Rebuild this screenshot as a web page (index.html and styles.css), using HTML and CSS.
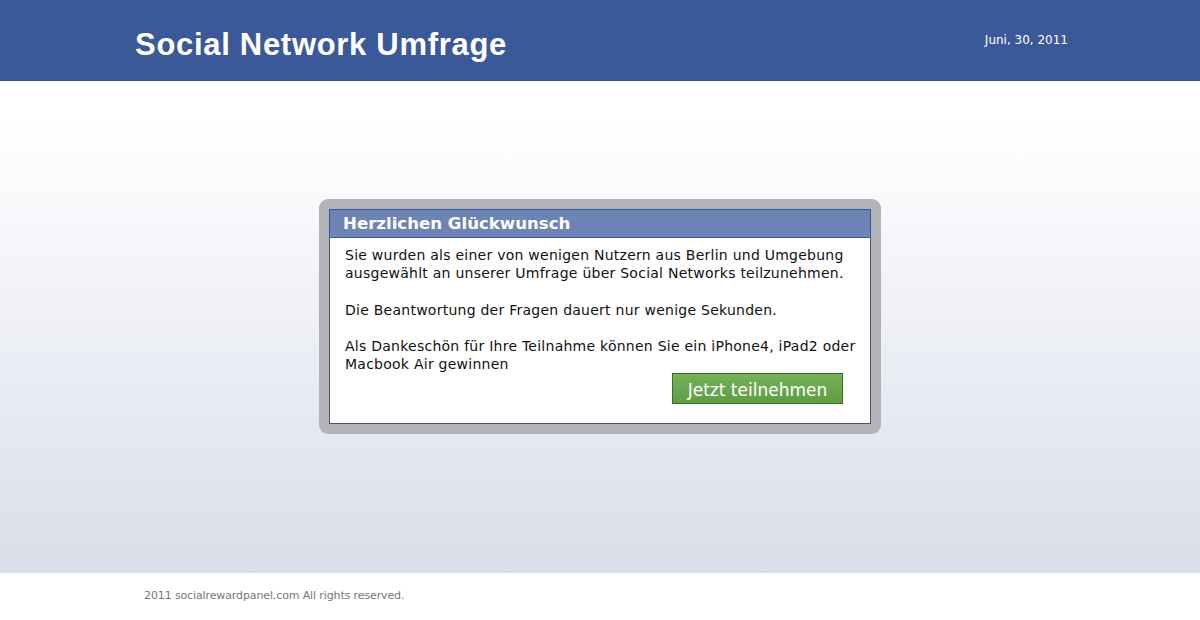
FILE: index.html
```html
<!DOCTYPE html>
<html lang="de">
  <head>
    <meta charset="UTF-8" />
    <title>Social Network Umfrage</title>
    <link rel="stylesheet" href="styles.css">
  </head>
  <body>
    <header class="topbar">
      <div class="wrap flex space-between">
        <h1 class="logo">Social Network Umfrage</h1>
        <span class="date">Juni, 30, 2011</span>
      </div>
    </header>
    <main class="stage">
      <div class="frame">
        <div class="dialog">
          <h2 class="dialog-title">Herzlichen Glückwunsch</h2>
          <div class="dialog-body">
            <p>Sie wurden als einer von wenigen Nutzern aus Berlin und Umgebung ausgewählt an unserer Umfrage über Social Networks teilzunehmen.</p>
            <p>Die Beantwortung der Fragen dauert nur wenige Sekunden.</p>
            <p>Als Dankeschön für Ihre Teilnahme können Sie ein iPhone4, iPad2 oder Macbook Air gewinnen</p>
            <div class="actions">
              <a href="#" class="btn">Jetzt teilnehmen</a>
            </div>
          </div>
        </div>
      </div>
    </main>
    <footer class="footer">
      <p>2011 socialrewardpanel.com All rights reserved.</p>
    </footer>
  </body>
</html>
```

FILE: styles.css
```css
*,
*::before,
*::after {
  box-sizing: border-box;
}
:root {
  --clr-fb: #3b5998;
  --clr-fb-light: #6d84b4;
  --ff-base: "DejaVu Sans", Verdana, sans-serif;
  --ff-head: "Liberation Sans", Arial, sans-serif;
}
body {
  margin: 0;
  font-family: var(--ff-base);
  color: #111;
  background: #fff;
}
.flex {
  display: flex;
}
.space-between {
  justify-content: space-between;
}
.wrap {
  width: 940px;
  margin-inline: auto;
}
.topbar {
  height: 81px;
  background-color: var(--clr-fb);
  color: #fff;
}
.logo {
  margin: 0;
  padding-top: 27px;
  padding-left: 5px;
  font-family: var(--ff-head);
  font-size: 31px;
  font-weight: bold;
  letter-spacing: 0.7px;
}
.date {
  padding-top: 33px;
  padding-right: 2px;
  font-size: 12px;
}
.stage {
  height: 492px;
  padding-top: 118px;
  background: linear-gradient(#fff 0%, #fff 8%, #d9deea 100%);
}
.frame {
  width: 562px;
  margin-inline: auto;
  padding: 10px;
  background-color: #b2b3b9;
  border-radius: 9px;
}
.dialog {
  background: #fff;
  border: 1px solid #555;
  border-top: 0;
}
.dialog-title {
  margin: 0 -1px;
  height: 29px;
  padding: 4px 0 0 13px;
  font-size: 16.6px;
  font-weight: bold;
  color: #fff;
  background-color: var(--clr-fb-light);
  border: 1px solid var(--clr-fb);
}
.dialog-body {
  padding: 8px 6px 19px 15px;
  font-size: 14px;
  line-height: 1.3;
  letter-spacing: 0.25px;
}
.dialog-body p {
  margin: 0 0 18.2px;
}
.dialog-body p:last-of-type {
  margin-bottom: 0;
}
.actions {
  display: flex;
  justify-content: flex-end;
  padding-right: 21px;
}
.btn {
  display: block;
  width: 171px;
  height: 31px;
  padding-top: 5px;
  text-align: center;
  font-size: 17px;
  letter-spacing: 0;
  color: #fff;
  text-decoration: none;
  background: linear-gradient(#74b25a, #5f9c45);
  border: 1px solid #3c6e25;
}
.footer {
  width: 912px;
  margin-inline: auto;
  padding-top: 16px;
  font-size: 11px;
  letter-spacing: -0.12px;
  color: #777;
}
.footer p {
  margin: 0;
}
```
